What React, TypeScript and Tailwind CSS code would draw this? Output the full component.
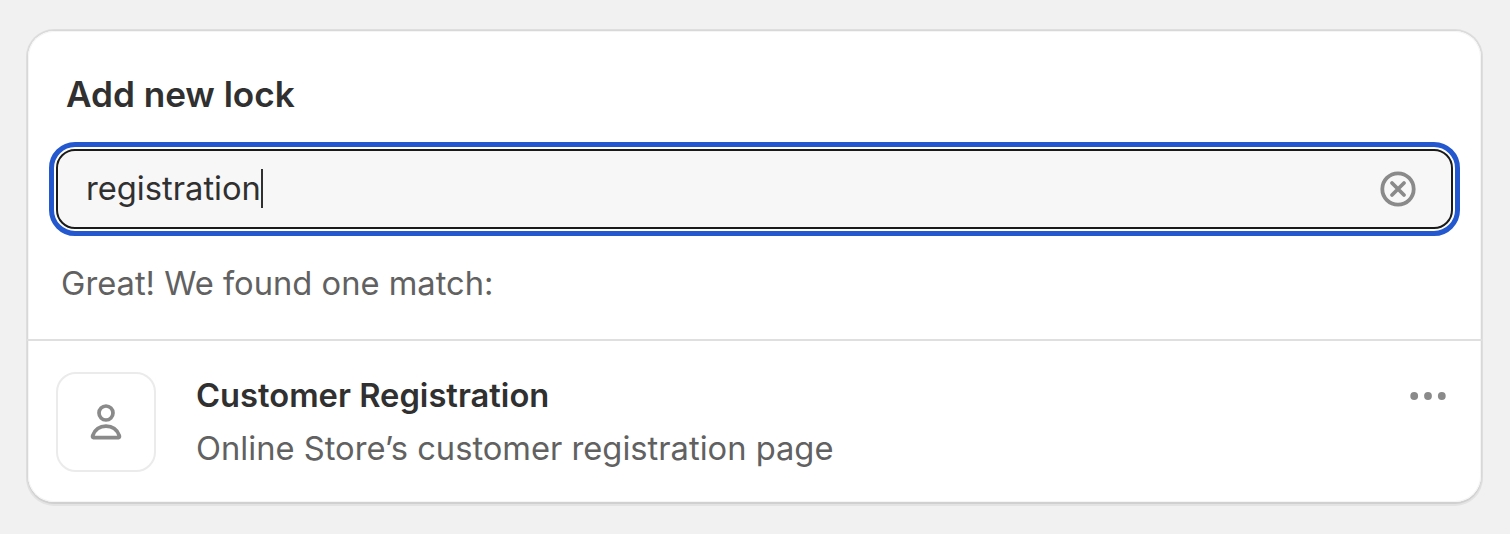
export default function App() {
  return (
    <main className="h-[534px] w-[1510px] bg-[#f1f1f1] px-7 pt-[31px] font-['Inter',sans-serif] text-[#303030]">
      <section className="flex h-[471px] w-[1453px] flex-col rounded-[26px] bg-white shadow-[inset_0_0_0_1px_#f5f5f5,0_2px_0_0_#d0d0d0,0_0_0_1px_#d8d8d8,0_0_0_2px_#dedede,0_2px_0_2px_#e3e3e3]">
        <div className="flex h-[308px] flex-col px-[21px] pt-[39px]">
          <h1 className="ml-[17px] h-12 text-[35.2px] leading-[48px] font-semibold tracking-[-0.05px]">Add new lock</h1>
          <div className="mt-[24px] h-[94px] w-[1411px] shrink-0 rounded-[26px] border-[5px] border-[#2358cf] p-[2px]">
            <div className="flex h-full items-center rounded-[19px] border-2 border-[#1a1a1a] bg-[#f7f7f7] pr-[35px] pl-7">
              <span className="-mt-[2px] text-[32.7px] leading-10">registration</span>
              <span className="-mt-px h-[39px] w-[2px] bg-[#303030]" />
              <svg className="ml-auto" width="36" height="36" viewBox="0 0 36 36" fill="none" stroke="#8a8a8a" strokeWidth="3.8" strokeLinecap="round">
                <circle cx="18" cy="18" r="15.7" />
                <path d="M12 12 24 24M24 12 12 24" />
              </svg>
            </div>
          </div>
          <p className="mt-[27px] ml-[12px] text-[32.7px] leading-10 text-[#616161]">Great! We found one match:</p>
        </div>
        <div className="-mx-[2px] flex flex-1 border-t-2 border-[#dfdfdf] pt-[31px] pr-9 pl-[30px]">
          <div className="flex size-[100px] items-center justify-center rounded-[20px] border-2 border-[#ebebeb]">
            <svg width="34" height="38" viewBox="0 0 34 38" fill="none" stroke="#8a8a8a" strokeWidth="3.7">
              <circle cx="17" cy="10" r="7" />
              <path d="M4.3 34.6H29.7C30.5 34.6 30.6 33.6 30.2 32.5C28 26.5 23 23.2 17 23.2S6 26.5 3.8 32.5C3.4 33.6 3.5 34.6 4.3 34.6Z" />
            </svg>
          </div>
          <div className="ml-10">
            <h2 className="mt-[3px] text-[32.7px] leading-10 font-semibold">Customer Registration</h2>
            <p className="mt-[13px] text-[32.7px] leading-10 text-[#616161]">Online Store’s customer registration page</p>
          </div>
          <svg className="mt-[19px] ml-auto" width="38" height="10" viewBox="0 0 38 10" fill="#8a8a8a">
            <circle cx="5.2" cy="5" r="3.9" />
            <circle cx="19" cy="5" r="3.9" />
            <circle cx="32.8" cy="5" r="3.9" />
          </svg>
        </div>
      </section>
    </main>
  );
}
